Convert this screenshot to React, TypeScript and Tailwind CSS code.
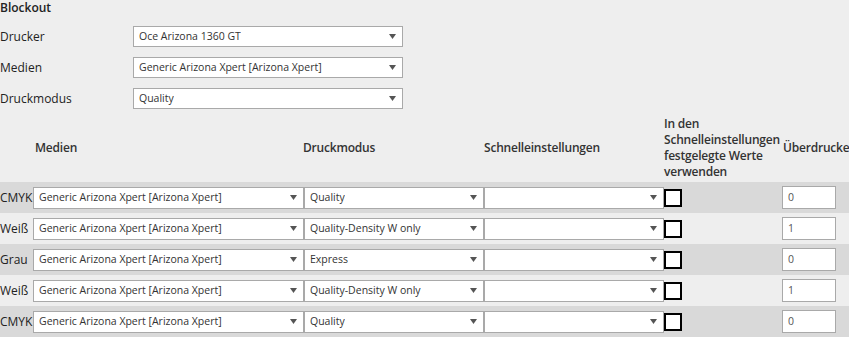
const Arrow = () => (
  <svg width="7" height="5" viewBox="0 0 7 5" className="shrink-0">
    <path d="M0 0h7L3.5 5z" fill="#555" />
  </svg>
);

type SelectProps = { value: string; className: string };

const Select = ({ value, className }: SelectProps) => {
  return (
    <div
      className={`flex shrink-0 items-center justify-between bg-white border border-[#a9a9a9] pl-[5px] pr-[6px] text-[10.5px] text-[#333] ${className}`}
    >
      <span className="truncate">{value}</span>
      <Arrow />
    </div>
  );
};

const MEDIA = "Generic Arizona Xpert [Arizona Xpert]";

const settings = [
  { label: "Drucker", value: "Oce Arizona 1360 GT" },
  { label: "Medien", value: MEDIA },
  { label: "Druckmodus", value: "Quality" },
];

const channels = [
  { label: "CMYK", mode: "Quality", over: "0" },
  { label: "Weiß", mode: "Quality-Density W only", over: "1" },
  { label: "Grau", mode: "Express", over: "0" },
  { label: "Weiß", mode: "Quality-Density W only", over: "1" },
  { label: "CMYK", mode: "Quality", over: "0" },
];

export default function App() {
  return (
    <div className="w-[849px] h-[337px] overflow-hidden bg-[#eeeeee] text-[12px] text-[#222] font-['Open_Sans',sans-serif]">
      {/* Blockout settings */}
      <div className="font-semibold leading-[16px]">Blockout</div>
      <div className="mt-[10px] flex flex-col gap-[10px]">
        {settings.map((s) => (
          <div key={s.label} className="flex items-center h-[21px]">
            <div className="w-[133px] shrink-0">{s.label}</div>
            <Select value={s.value} className="w-[270px] h-[21px]" />
          </div>
        ))}
      </div>

      {/* Table header */}
      <div className="mt-[7px] h-[64px] flex items-center font-semibold tracking-[-0.2px] text-[#333] leading-[16px]">
        <div className="w-[35px] shrink-0" />
        <div className="w-[268px] shrink-0">Medien</div>
        <div className="w-[181px] shrink-0">Druckmodus</div>
        <div className="w-[180px] shrink-0">Schnelleinstellungen</div>
        <div className="w-[119px] shrink-0 whitespace-nowrap">
          In den
          <br />
          Schnelleinstellungen
          <br />
          festgelegte Werte
          <br />
          verwenden
        </div>
        <div className="shrink-0 whitespace-nowrap">Überdrucken</div>
      </div>

      {/* Channel rows */}
      <div className="mt-[2px]">
        {channels.map((c, i) => (
          <div
            key={i}
            className={`flex items-center h-[31px] ${i % 2 === 0 ? "bg-[#d9d9d9]" : "bg-[#eeeeee]"}`}
          >
            <div className="w-[33px] shrink-0 whitespace-nowrap">{c.label}</div>
            <Select value={MEDIA} className="w-[271px] h-[22px]" />
            <Select value={c.mode} className="w-[180px] h-[22px]" />
            <Select value="" className="w-[180px] h-[22px]" />
            <div className="w-[18px] h-[18px] shrink-0 border-2 border-black bg-white" />
            <div className="ml-[100px] w-[54px] h-[23px] shrink-0 flex items-center border border-[#a9a9a9] bg-white pl-[5px] text-[10.5px] text-[#555]">
              {c.over}
            </div>
          </div>
        ))}
      </div>
    </div>
  );
}
